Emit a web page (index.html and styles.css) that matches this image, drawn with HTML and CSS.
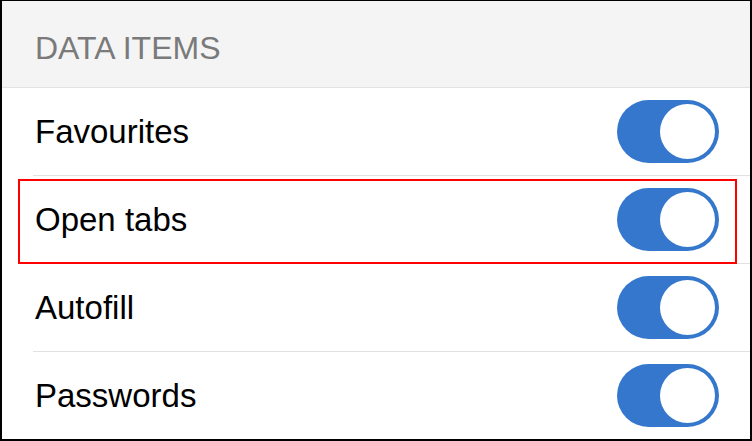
FILE: index.html
```html
<!DOCTYPE html>
<html>
<head>
<meta charset="utf-8">
<link rel="stylesheet" href="styles.css">
</head>
<body>
<div class="frame">
  <div class="header">DATA ITEMS</div>
  <div class="row"><span class="label">Favourites</span><span class="toggle"><span class="knob"></span></span></div>
  <div class="row highlighted"><span class="label">Open tabs</span><span class="toggle"><span class="knob"></span></span><span class="mark"></span></div>
  <div class="row"><span class="label">Autofill</span><span class="toggle"><span class="knob"></span></span></div>
  <div class="row"><span class="label">Passwords</span><span class="toggle"><span class="knob"></span></span></div>
</div>
</body>
</html>
```
FILE: styles.css
```css
html, body { margin: 0; padding: 0; background: #fff; }
.frame {
  box-sizing: border-box;
  width: 752px;
  height: 441px;
  overflow: hidden;
  border-top: 1px solid #000;
  border-left: 2px solid #000;
  border-right: 2px solid #000;
  border-bottom: 2px solid #000;
  font-family: "Liberation Sans", Arial, sans-serif;
  display: flex;
  flex-direction: column;
}
.header {
  height: 87px;
  box-sizing: border-box;
  padding-top: 8px;
  flex: none;
  background: #f4f4f4;
  border-bottom: 1px solid #e2e2e2;
  color: #7a7a7a;
  font-size: 32px;
  padding-left: 33px;
  display: flex;
  align-items: center;
}
.row {
  position: relative;
  flex: none;
  height: 87px;
  margin-left: 31px;
  border-bottom: 1px solid #e2e2e2;
  display: flex;
  align-items: center;
  justify-content: space-between;
  padding-right: 31px;
}
.label { font-size: 33px; color: #000; padding-left: 2px; }
.toggle {
  width: 102px;
  height: 63px;
  border-radius: 32px;
  background: #3477cc;
  display: flex;
  align-items: center;
  justify-content: flex-end;
  padding-right: 4px;
  box-sizing: border-box;
}
.knob {
  width: 55px;
  height: 55px;
  border-radius: 50%;
  background: #fff;
}
.mark {
  position: absolute;
  left: -15px;
  top: 3px;
  width: 715px;
  height: 81px;
  border: 2px solid #f00;
}
```
